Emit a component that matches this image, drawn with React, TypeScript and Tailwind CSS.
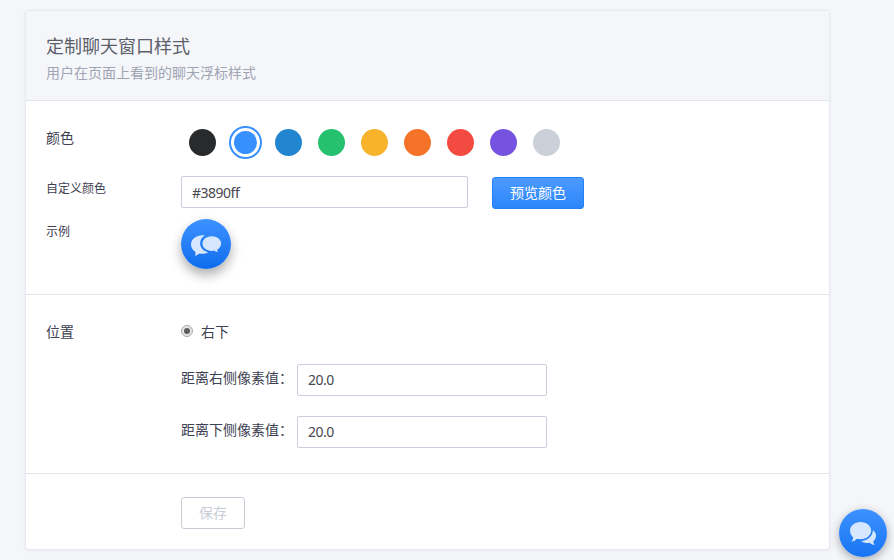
const FONT = "font-['Noto_Sans','Noto_Sans_CJK_SC',sans-serif]";

const swatches = [
  "bg-[#292a2c]",
  "selected",
  "bg-[#2185d0]",
  "bg-[#25c16f]",
  "bg-[#f7b32b]",
  "bg-[#f57328]",
  "bg-[#f34b42]",
  "bg-[#7553e0]",
  "bg-[#cbd0d8]",
];

function Swatch({ color }: { color: string }) {
  if (color === "selected") {
    return (
      <span className="-mx-[3px] flex size-[33px] items-center justify-center rounded-full border-2 border-[#3890ff]">
        <span className="size-[23px] rounded-full bg-[#3890ff]" />
      </span>
    );
  }
  return <span className={"size-[27px] rounded-full " + color} />;
}

function SampleBubble() {
  return (
    <div className="size-[50px] rounded-full bg-linear-to-b from-[#3d92ff] to-[#0b6cee] shadow-[0_6px_12px_rgba(0,0,0,0.32)]">
      <svg viewBox="0 0 50 50" className="size-full" fill="#d7e8fe">
        <path d="M24 16.300C16.400 15.200 10 19.600 10 25.600c0 3.300 1.800 5.800 4.500 7.400 0 1.400-.1 2.600-.5 3.700 2-.4 3.200-1.200 4.200-2.200 3.300.5 6.500.3 9.200-1.300-5-.9-8.300-4.600-8.300-9 0-3.400 1.900-6.300 4.900-7.900Z" />
        <path d="M30.800 17.200c5.200 0 9.300 3.200 9.300 7.300 0 2.600-1.500 4.700-3.800 6 0 1.100.2 1.900.5 2.700-1.600-.3-2.700-.8-3.600-1.600-.8.200-1.600.3-2.400.3-5.200 0-9.300-3.200-9.300-7.400 0-4.100 4.100-7.300 9.300-7.300Z" />
      </svg>
    </div>
  );
}

function ChatLauncher() {
  return (
    <div className="absolute top-[509px] left-[839px] size-12 rounded-full bg-linear-to-b from-[#3d92ff] to-[#1674f3] shadow-[0_3px_10px_rgba(0,0,0,0.32)]">
      <svg viewBox="0 0 48 48" className="size-full" fill="#d7e8fe">
        <path d="M21.600 13c5.900 0 10.500 3.800 10.500 8.600s-4.600 8.700-10.500 8.700c-1.300 0-2.500-.2-3.600-.5-1.600 1.500-3.200 2.600-5.700 2.900 1.200-1.100 1.700-2.500 1.800-4.400-1.900-1.600-3-3.900-3-6.700 0-4.800 4.600-8.600 10.500-8.600Z" />
        <path d="M33.900 21.300c2 1.400 3.100 3.200 3.100 5.500 0 2.200-1 4.100-2.600 5.400 0 1.600.4 2.700 1.300 3.700-2.200-.2-3.800-1-5.100-2.200-3.500.7-6.400 0-8.500-1.700 6.500-.4 11.600-4.500 11.800-10.700Z" />
      </svg>
    </div>
  );
}

function OffsetField({ label }: { label: string }) {
  return (
    <div className="flex h-8">
      <label className="w-[116px] whitespace-nowrap pt-[4px] text-sm leading-5">{label}</label>
      <input
        defaultValue="20.0"
        className="h-8 w-[250px] rounded-[2px] border border-[#cbcdda] bg-white px-[10px] pb-[2px] text-sm tracking-[-0.5px] text-[#484850] outline-none"
      />
    </div>
  );
}

export default function App() {
  return (
    <div className={"relative h-[560px] w-[894px] overflow-hidden bg-[#f5f6fa] pt-[11px] pl-[26px] text-[#3d4152] " + FONT}>
      <main className="h-[538px] w-[803px] rounded-[3px] bg-white shadow-[0_0_0_1px_#e7e9ef,0_1px_4px_rgba(60,70,100,0.12)]">
        <header className="h-[90px] rounded-t-[3px] border-b border-[#e3e5ec] bg-[#f5f6fa] px-5 pt-[23px]">
          <h1 className="text-lg leading-6 text-[#5b5f69]">定制聊天窗口样式</h1>
          <p className="mt-[5px] text-sm leading-5 text-[#9fa4b2]">用户在页面上看到的聊天浮标样式</p>
        </header>

        <section className="h-[194px] border-b border-[#e3e5ec] px-5 pt-[25px]">
          <div className="flex h-[50px]">
            <div className="w-[135px] pt-[2px] text-sm leading-5">颜色</div>
            <div className="flex h-[33px] items-center gap-4 pl-2">
              {swatches.map((color) => (
                <Swatch key={color} color={color} />
              ))}
            </div>
          </div>
          <div className="flex h-[43px]">
            <div className="w-[135px] pt-[4px] text-xs leading-[18px]">自定义颜色</div>
            <input
              defaultValue="#3890ff"
              className="h-8 w-[287px] rounded-[2px] border border-[#cbcdda] bg-white px-[10px] pt-px text-sm tracking-[-0.5px] text-[#484850] outline-none"
            />
            <button className="mt-px ml-6 h-8 w-[92px] rounded-[3px] border border-[#2480f5] bg-linear-to-b from-[#4c9aff] to-[#2b86fa] text-sm text-white">
              预览颜色
            </button>
          </div>
          <div className="flex">
            <div className="w-[135px] pt-[4px] text-xs leading-[18px]">示例</div>
            <SampleBubble />
          </div>
        </section>

        <section className="h-[179px] border-b border-[#e3e5ec] px-5 pt-[26px]">
          <div className="flex h-[43px]">
            <div className="w-[135px] pt-px text-sm leading-5">位置</div>
            <div className="flex h-5 text-sm leading-5">
              <span className="mt-[4px] mr-2 flex size-3 items-center justify-center rounded-full border border-[#a9a9a9] bg-[#e4e4e4]">
                <span className="size-[6px] rounded-full bg-[#5c5c5c]" />
              </span>
              <span className="pt-px">右下</span>
            </div>
          </div>
          <div className="flex flex-col gap-5 pl-[135px]">
            <OffsetField label="距离右侧像素值：" />
            <OffsetField label="距离下侧像素值：" />
          </div>
        </section>

        <footer className="pt-[23px] pl-[155px]">
          <button className="h-8 w-16 rounded-[3px] border border-[#c9cdd8] bg-white text-sm text-[#c9cdd8]">保存</button>
        </footer>
      </main>
      <ChatLauncher />
    </div>
  );
}
